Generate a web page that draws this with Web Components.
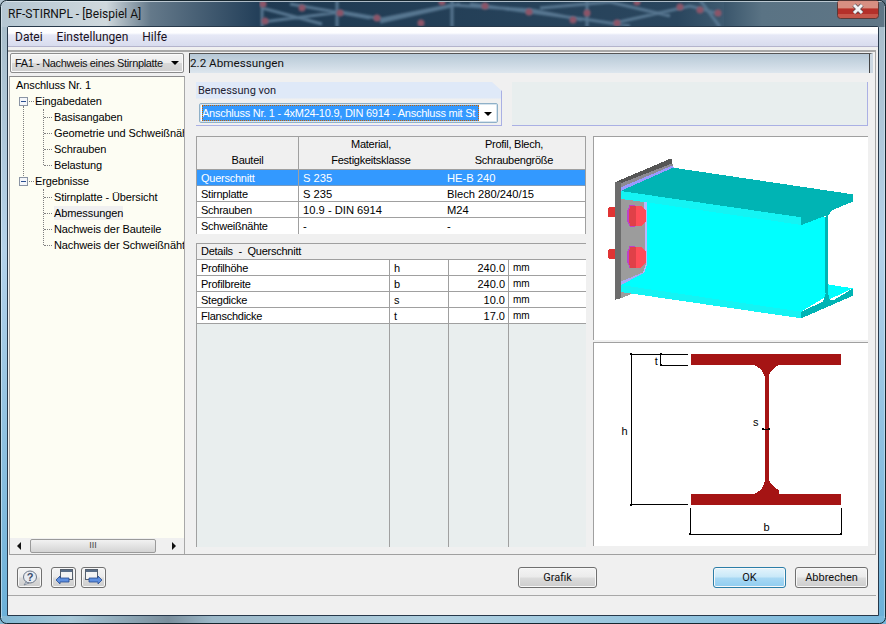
<!DOCTYPE html>
<html>
<head>
<meta charset="utf-8">
<title>RF-STIRNPL</title>
<style>
html, body { margin: 0; padding: 0; width: 886px; height: 624px; overflow: hidden; background: #4c6a80; }
body { font: 11px "Liberation Sans", Arial, sans-serif; color: #000; }
</style>
</head>
<body>
<app-window>
  <title-bar slot="title">RF-STIRNPL - [Beispiel A]</title-bar>
  <menu-bar slot="menu"></menu-bar>
  <side-panel slot="side"></side-panel>
  <page-head slot="head">2.2 Abmessungen</page-head>
  <design-group slot="group"></design-group>
  <parts-table slot="parts"></parts-table>
  <details-table slot="details"></details-table>
  <view-3d slot="view"></view-3d>
  <section-view slot="section"></section-view>
  <button-bar slot="buttons"></button-bar>
</app-window>

<script>
const FONT = '"Liberation Sans", Arial, sans-serif';
const UI = 'Roboto, "Liberation Sans", Arial, sans-serif';

function shadow(el, html) {
    const t = document.createElement('template');
    t.innerHTML = html;
    el.attachShadow({ mode: 'open' }).appendChild(t.content.cloneNode(true));
}

class AppWindow extends HTMLElement {
    constructor() {
        super();
        const dots = [[265, 21], [263, 4], [302, 8], [340, 13], [377, 18], [421, 23], [442, 2], [485, 6], [529, 12], [573, 20], [587, 13], [617, 23], [637, 2], [680, 7], [700, 10], [718, 13]];
        shadow(this, `
            <style>
                :host {
                    display: flex; flex-direction: column; width: 886px; height: 624px; box-sizing: border-box;
                    padding: 0 7px 8px 7px; position: relative; overflow: hidden;
                    font: 11px ${FONT};
                }
                .frame { position: absolute; inset: 0; }
                .client {
                    position: relative; flex: 1; display: flex; flex-direction: column; min-height: 0;
                    background: #f0f0f0; border: 1px solid #27384a; border-radius: 2px 2px 0 0;
                }
                .body {
                    flex: 1; display: flex; min-height: 0; gap: 4px; margin: 3px 2px 0 0; padding: 1px 2px 0 1px;
                    border-top: 2px solid #a8a8a8; border-right: 1px solid #a8a8a8;
                }
                .right { flex: 1; display: flex; flex-direction: column; min-width: 0; }
                .page { flex: 1; display: flex; gap: 7px; min-height: 0; padding: 0 0 7px 7px; flex-wrap: nowrap; }
                .tables { width: 390px; display: flex; flex-direction: column; flex: none; }
                .views { flex: 1; display: flex; flex-direction: column; padding-top: 63px; }
                ::slotted([slot=group]) { margin: 9px 0 10px; }
            </style>
            <svg class="frame" width="886" height="624" viewBox="0 0 886 624">
                <defs>
                    <linearGradient id="top" x1="0" x2="1" y1="0" y2="0">
                        <stop offset="0" stop-color="#b4c6d2"/>
                        <stop offset=".12" stop-color="#cfd8dd"/>
                        <stop offset=".17" stop-color="#64798a"/>
                        <stop offset=".29" stop-color="#24405a"/>
                        <stop offset=".5" stop-color="#2b4660"/>
                        <stop offset=".8" stop-color="#2d4a62"/>
                        <stop offset=".86" stop-color="#5a7384"/>
                        <stop offset="1" stop-color="#5f7686"/>
                    </linearGradient>
                    <linearGradient id="bot" x1="0" x2="1" y1="0" y2="0">
                        <stop offset="0" stop-color="#82b8d4"/>
                        <stop offset=".08" stop-color="#a8c8d8"/>
                        <stop offset=".19" stop-color="#7a8e9c"/>
                        <stop offset=".24" stop-color="#9cb8c8"/>
                        <stop offset=".5" stop-color="#b0d0e0"/>
                        <stop offset="1" stop-color="#78b8dc"/>
                    </linearGradient>
                    <linearGradient id="side" x1="0" x2="0" y1="0" y2="1">
                        <stop offset="0" stop-color="#a8bcc8"/>
                        <stop offset=".4" stop-color="#b4d2ea"/>
                        <stop offset="1" stop-color="#6ab0d8"/>
                    </linearGradient>
                    <filter id="soft" x="-5%" y="-50%" width="110%" height="200%"><feGaussianBlur stdDeviation="1.300"/></filter>
                    <linearGradient id="netfade" x1="0" x2="1" y1="0" y2="0">
                        <stop offset="0" stop-color="#1f3a52"/>
                        <stop offset=".9" stop-color="#2a465e"/>
                        <stop offset="1" stop-color="#3e5a70"/>
                    </linearGradient>
                    <clipPath id="net"><rect x="259" y="2" width="465" height="24"/></clipPath>
                </defs>
                <rect width="886" height="624" fill="url(#side)"/>
                <rect width="886" height="27" fill="url(#top)"/>
                <rect y="616" width="886" height="8" fill="url(#bot)"/>
                <g clip-path="url(#net)">
                    <rect x="259" y="1" width="465" height="25" fill="url(#netfade)"/>
                    <g stroke="#577690" stroke-width="3" fill="none" filter="url(#soft)">
                        <path d="M262 0v27M337 0v27M452 0v27M587 0v27M700 0l20 27"/>
                        <path d="M262 22l80-10 40 7 70-14 80 5 50 10M290 4l80 14M380 22l80-18M470 4l120 16 40 6M540 8l70-6 60 14M610 24l80-18 30 8M262 8l60 16"/>
                    </g>
                    <g fill="#8c5468" filter="url(#soft)">
                        ${dots.map(d => `<circle cx="${d[0]}" cy="${d[1]}" r="3.500"/>`).join('')}
                    </g>
                </g>
                <path d="M3 1.500H883" stroke="#e4edf2" stroke-opacity=".7"/>
                <rect x=".5" y=".5" width="885" height="623" rx="6" fill="none" stroke="#16262f"/>
                <path d="M1.500 6V618" stroke="#eef6fb" stroke-opacity=".5"/>
                <path d="M884.500 6V618" stroke="#eef6fb" stroke-opacity=".4"/>
                <rect x="837.5" y=".5" width="41" height="18" rx="3" fill="#c5564a" stroke="#5a3a38"/>
                <rect x="838" y="1" width="40" height="7" fill="#d78f82"/>
                <rect x="838" y="9" width="40" height="5" fill="#b4302a"/>
                <path d="M854 5l8 8M862 5l-8 8" stroke="#5a4a50" stroke-width="4.500" fill="none"/>
                <path d="M854 5l8 8M862 5l-8 8" stroke="#f2f4f6" stroke-width="3" fill="none"/>
            </svg>
            <slot name="title"></slot>
            <div class="client">
                <slot name="menu"></slot>
                <div class="body">
                    <slot name="side"></slot>
                    <div class="right">
                        <slot name="head"></slot>
                        <div class="page">
                            <div class="tables">
                                <slot name="group"></slot>
                                <slot name="parts"></slot>
                                <slot name="details"></slot>
                            </div>
                            <div class="views">
                                <slot name="view"></slot>
                                <slot name="section"></slot>
                            </div>
                        </div>
                    </div>
                </div>
                <slot name="buttons"></slot>
            </div>
        `);
    }
}

class TitleBar extends HTMLElement {
    constructor() {
        super();
        shadow(this, `
            <style>
                :host { display: block; height: 26px; flex: none; box-sizing: border-box; padding: 7px 0 0 1px; font: 12px/14px ${UI}; color: #111; position: relative; }
            </style>
            <slot></slot>
        `);
    }
}

class MenuBar extends HTMLElement {
    constructor() {
        super();
        shadow(this, `
            <style>
                :host {
                    display: flex; gap: 14px; height: 20px; box-sizing: border-box; padding: 3px 0 0 7px;
                    font: 12px/15px ${UI}; color: #1a1020; flex: none;
                    background: linear-gradient(#ffffff 0, #fdfdff 6px, #e6e8f6 8px, #d8dcee 19px);
                    border-bottom: 1px solid #b4b4cc;
                }
            </style>
            <span>Datei</span><span>Einstellungen</span><span>Hilfe</span>
        `);
    }
}

class SidePanel extends HTMLElement {
    constructor() {
        super();
        const expander = '<svg width="9" height="9"><rect x=".5" y=".5" width="8" height="8" fill="#f4f6fa" stroke="#8a94a4"/><path d="M2 4.500h5" stroke="#2a4f90"/></svg>';
        const leaves = list => list.map(t => `<div class="leaf"><span>${t}</span></div>`).join('');
        shadow(this, `
            <style>
                :host { display: flex; flex-direction: column; width: 176px; gap: 3px; flex: none; }
                .combo {
                    height: 20px; flex: none; margin: 0 1px; box-sizing: border-box; border: 1px solid #8c8c8c; border-radius: 2px;
                    background: linear-gradient(#f4f4f4 0, #ececec 50%, #d8d8d8 52%, #cfcfcf 100%);
                    display: flex; align-items: center; padding-left: 4px; font: 11px ${FONT}; letter-spacing: -.35px; color: #111; position: relative;
                    box-shadow: inset 0 0 0 1px #fafafa;
                }
                .combo span { width: 151px; overflow: hidden; white-space: nowrap; }
                .combo i { position: absolute; right: 4px; top: 7px; border: 4px solid transparent; border-top: 4px solid #000; }
                .tree {
                    flex: 1; border: 1px solid #a8a8a8; border-bottom: 0; border-top-color: #8c8c8c; background: #fdfdf3;
                    display: flex; flex-direction: column; min-height: 0;
                }
                .wrap { position: relative; flex: 1; overflow: hidden; }
                .items { padding: 0 0 0 6px; white-space: nowrap; font: 11px ${FONT}; letter-spacing: -.1px; }
                .row, .node, .leaf { height: 16px; line-height: 16px; position: relative; }
                .node { padding-left: 19px; }
                .node svg { position: absolute; left: 3px; top: 4px; }
                .node::after { content: ""; position: absolute; left: 13px; top: 8px; width: 5px; border-top: 1px dotted #808080; }
                .kids { position: relative; padding-left: 38px; }
                .kids::before { content: ""; position: absolute; left: 27px; top: 0; bottom: 8px; border-left: 1px dotted #808080; }
                .leaf::before { content: ""; position: absolute; left: -10px; top: 8px; width: 8px; border-top: 1px dotted #808080; }
                .sel span { background: #f0f0f0; padding: 1px 0; }
                .vline { position: absolute; left: 13px; top: 29px; height: 70px; border-left: 1px dotted #808080; }
                .scroll { height: 16px; flex: none; background: #f0f0f0; position: relative; }
                .thumb {
                    position: absolute; left: 20px; width: 124px; top: 1px; height: 12px; border: 1px solid #9a9a9a; border-radius: 2px;
                    background: linear-gradient(#f2f2f2, #d4d4d4); text-align: center; font: 9px/11px ${FONT}; color: #444;
                }
                .arr { position: absolute; top: 4px; border: 4px solid transparent; }
                .arr.l { left: 7px; border-right: 4px solid #111; border-left-width: 0; }
                .arr.r { right: 8px; border-left: 4px solid #111; border-right-width: 0; }
            </style>
            <div class="combo"><span>FA1 - Nachweis eines Stirnplatte</span><i></i></div>
            <div class="tree">
                <div class="wrap">
                    <div class="vline"></div>
                    <div class="items">
                        <div class="row">Anschluss Nr. 1</div>
                        <div class="node">${expander}Eingabedaten</div>
                        <div class="kids">${leaves(['Basisangaben', 'Geometrie und Schweißnäh', 'Schrauben', 'Belastung'])}</div>
                        <div class="node">${expander}Ergebnisse</div>
                        <div class="kids">
                            <div class="leaf"><span>Stirnplatte - Übersicht</span></div>
                            <div class="leaf sel"><span>Abmessungen</span></div>
                            <div class="leaf"><span>Nachweis der Bauteile</span></div>
                            <div class="leaf"><span>Nachweis der Schweißnäht</span></div>
                        </div>
                    </div>
                </div>
                <div class="scroll"><i class="arr l"></i><div class="thumb">III</div><i class="arr r"></i></div>
            </div>
        `);
    }
}

class PageHead extends HTMLElement {
    constructor() {
        super();
        shadow(this, `
            <style>
                :host {
                    display: block; height: 20px; box-sizing: border-box; flex: none;
                    border-top: 1px solid #555; border-left: 1px solid #444; border-right: 3px solid #ccd8e2;
                    box-shadow: inset -1px 0 #444;
                    background: linear-gradient(#b6c8d6, #dde6ee);
                    font: 11.700px/19px ${UI}; color: #111;
                }
            </style>
            <slot></slot>
        `);
    }
}

class DesignGroup extends HTMLElement {
    constructor() {
        super();
        shadow(this, `
            <style>
                :host { display: flex; gap: 10px; height: 44px; width: 672px; flex: none; }
                .box {
                    width: 306px; box-sizing: border-box; position: relative;
                    background: linear-gradient(#dfe9f8 0, #dfe9f8 16px, #f0f0f0 17px);
                    border-right: 1px solid #aab0e4; border-bottom: 1px solid #aab0e4;
                    clip-path: polygon(0 0, 296px 0, 100% 9px, 100% 100%, 0 100%);
                }
                .cap { font: 11px/15px ${UI}; color: #223; padding: 1px 0 0 2px; height: 21px; box-sizing: border-box; }
                .select {
                    margin: 0 0 0 3px; width: 299px; height: 20px; box-sizing: border-box; border: 1px solid #8fb0c8; border-radius: 2px; background: #fff;
                    display: flex; align-items: center; padding-left: 2px; position: relative; box-shadow: inset 0 0 0 1px #d6e4ee;
                    font: 11px ${FONT}; letter-spacing: -.25px;
                }
                .select span { background: #3399ff; color: #fff; width: 277px; height: 16px; line-height: 16px; overflow: hidden; white-space: nowrap; outline: 1px dotted #c86000; outline-offset: -1px; }
                .select i { position: absolute; right: 5px; top: 8px; border: 4px solid transparent; border-top: 4px solid #000; }
                .blank { background: #e8eeee; border-right: 1px solid #aab0e4; border-bottom: 1px solid #aab0e4; box-sizing: border-box; width: 356px; flex: none; }
            </style>
            <div class="box">
                <div class="cap">Bemessung von</div>
                <div class="select"><span>Anschluss Nr. 1 - 4xM24-10.9, DIN 6914 - Anschluss mit St</span><i></i></div>
            </div>
            <div class="blank"></div>
        `);
    }
}

class PartsTable extends HTMLElement {
    constructor() {
        super();
        const rows = [
            ['Querschnitt', 'S 235', 'HE-B 240'],
            ['Stirnplatte', 'S 235', 'Blech 280/240/15'],
            ['Schrauben', '10.9 - DIN 6914', 'M24'],
            ['Schweißnähte', '-', '-']
        ];
        shadow(this, `
            <style>
                :host {
                    display: grid; grid-template-columns: 102px 144px 1fr; width: 390px; box-sizing: border-box; flex: none;
                    border-top: 1px solid #a0a0a0; border-left: 1px solid #a0a0a0; font: 11px ${FONT}; background: #fff; margin-bottom: 9px;
                }
                .h {
                    height: 33px; box-sizing: border-box; background: #f0f0f0; border-right: 1px solid #a0a0a0; border-bottom: 1px solid #a0a0a0;
                    text-align: center; display: flex; flex-direction: column; justify-content: flex-end; line-height: 16px; padding-bottom: 1px; letter-spacing: -.25px;
                }
                .h:nth-child(3) { border-right: 0; }
                .c {
                    height: 16px; box-sizing: border-box; line-height: 16px; padding-left: 4px; white-space: nowrap;
                    border-right: 1px solid #a0a0a0; border-bottom: 1px solid #a0a0a0; font-size: 11.200px;
                }
                .c:nth-child(3n+3) { border-right: 0; }
                .on { background: #3399ff; color: #fff; border-bottom-color: #7a9cc0; }
                .last { border-bottom: 0; }
                .l { padding-left: 4px; font-size: 11px; letter-spacing: -.25px; }
            </style>
            <div class="h"><div>Bauteil</div></div>
            <div class="h"><div>Material,</div><div>Festigkeitsklasse</div></div>
            <div class="h"><div>Profil, Blech,</div><div>Schraubengröße</div></div>
            ${rows.map((r, i) => r.map((c, j) => `<div class="c ${i === 0 ? 'on' : ''} ${i === 3 ? 'last' : ''} ${j === 0 ? 'l' : ''}">${c}</div>`).join('')).join('')}
        `);
    }
}

class DetailsTable extends HTMLElement {
    constructor() {
        super();
        const rows = [
            ['Profilhöhe', 'h', '240.0'],
            ['Profilbreite', 'b', '240.0'],
            ['Stegdicke', 's', '10.0'],
            ['Flanschdicke', 't', '17.0']
        ];
        shadow(this, `
            <style>
                :host {
                    flex: 1; display: flex; flex-direction: column; width: 390px; box-sizing: border-box; min-height: 0;
                    border-top: 1px solid #a0a0a0; border-left: 1px solid #a0a0a0; font: 11px ${FONT}; background: #e9eeee;
                }
                .title { height: 16px; flex: none; box-sizing: border-box; padding-left: 4px; line-height: 15px; background: #f0f0f0; border-bottom: 1px solid #a0a0a0; white-space: pre; letter-spacing: -.25px; }
                .grid { flex: 1; display: grid; grid-template-columns: 193px 59px 60px 1fr; grid-template-rows: repeat(4, 16px) 1fr; min-height: 0; }
                .c { box-sizing: border-box; height: 16px; line-height: 16px; background: #fff; border-bottom: 1px solid #a0a0a0; border-right: 1px solid #a0a0a0; padding: 0 4px; }
                .n { letter-spacing: -.25px; }
                .r { text-align: right; padding-right: 3px; }
                .u { border-right: 0; font-size: 10px; }
                .e { border-right: 1px solid #a0a0a0; }
                .e:last-child { border-right: 0; }
            </style>
            <div class="title">Details  -  Querschnitt</div>
            <div class="grid">
                ${rows.map(r => `<div class="c n">${r[0]}</div><div class="c">${r[1]}</div><div class="c r">${r[2]}</div><div class="c u">mm</div>`).join('')}
                <div class="e"></div><div class="e"></div><div class="e"></div><div class="e"></div>
            </div>
        `);
    }
}

class View3d extends HTMLElement {
    constructor() {
        super();
        shadow(this, `
            <style>
                :host { display: block; height: 204px; width: 275px; flex: none; box-sizing: border-box; background: #fff; border-top: 1px solid #a0a0a0; border-left: 1px solid #a0a0a0; }
                svg { display: block; }
            </style>
            <svg width="274" height="203" viewBox="13 21 822 609" shape-rendering="crispEdges">
                <!-- plate -->
                <polygon points="75,157 93,150 93,505 75,510" fill="#6c6c6c"/>
                <polygon points="75,157 240,87 248,87 248,100 93,160 93,157" fill="#555"/>
                <polygon points="93,160 248,100 250,110 93,175" fill="#8c8a92"/>
                <polygon points="93,172 250,106 254,118 93,186" fill="#9a9aff"/>
                <polygon points="93,205 172,215 172,430 93,462" fill="#9c9c9c"/>
                <polygon points="93,484 130,490 93,505" fill="#9c9c9c"/>
                <polygon points="93,455 158,428 160,436 93,466" fill="#a8a8f4"/>
                <!-- beam web and flanges -->
                <polygon points="172,215 635,283 700,258 712,265 712,498 635,545 93,465 158,432 172,405" fill="#00ffff"/>
                <polygon points="164,216 172,216 172,405 164,428 160,428 168,405" fill="#b8b8ff"/>
                <polygon points="93,183 635,262 635,285 172,217 93,207" fill="#14f4f4"/>
                <polygon points="93,183 250,113 790,193 790,215 635,262" fill="#00b4b4"/>
                <polygon points="635,262 790,215 728,240 712,262 706,258 635,285" fill="#00b4b4"/>
                <polygon points="707,262 714,262 714,488 707,488" fill="#00b4b4"/>
                <polygon points="714,463 790,475 715,510" fill="#00ffff"/>
                <polygon points="635,545 700,515 708,490 716,490 718,508 730,512 790,475 790,497 635,565" fill="#00b4b4"/>
                <polygon points="93,465 635,545 635,565 93,486" fill="#14f4f4"/>
                <!-- back nuts -->
                <polygon points="60,232 75,232 75,262 60,262 54,258 54,238" fill="#e03434"/>
                <polygon points="60,357 75,358 75,387 60,387 54,382 54,362" fill="#e03434"/>
                <!-- washers and heads -->
                <polygon points="120,225 135,225 135,290 120,290 112,272 112,243" fill="#c040c8"/>
                <polygon points="120,348 135,348 135,414 120,414 112,396 112,366" fill="#c040c8"/>
                <polygon points="122,228 155,228 168,240 168,275 155,288 122,288 117,272 117,245" fill="#e04048"/>
                <polygon points="122,352 155,352 168,365 168,400 155,413 122,413 117,396 117,368" fill="#e04048"/>
                <polygon points="140,228 155,228 168,240 168,275 155,288 140,288" fill="#ff4c58"/>
                <polygon points="140,352 155,352 168,365 168,400 155,413 140,413" fill="#ff4c58"/>
            </svg>
        `);
    }
}

class SectionView extends HTMLElement {
    constructor() {
        super();
        shadow(this, `
            <style>
                :host { display: block; height: 204px; width: 275px; margin-top: 2px; flex: none; box-sizing: border-box; background: #fff; border-top: 1px solid #a0a0a0; border-left: 1px solid #a0a0a0; }
                svg { display: block; }
                text { font: 33px ${FONT}; fill: #000; text-anchor: middle; }
            </style>
            <svg width="274" height="203" viewBox="13 9 822 609">
                <path fill="#a51414" shape-rendering="crispEdges" d="M303 42h450v33H568l-6 3-9 6-9 9-4 9-3 6V414l3 9 4 9 9 9 9 6 6 3v12h185v33H303v-33h190l6-3 9-6 9-9 5-9 3-9V108l-3-6-5-9-9-9-9-6-6-3H303z"/>
                <g stroke="#000" stroke-width="3" fill="none" shape-rendering="crispEdges">
                    <path d="M123 43h171M123 494h171M124 43v451M213 43v33M213 76h81M302 505v79M754 505v79M302 583h453M519 268h18"/>
                </g>
                <g fill="#000" shape-rendering="crispEdges">
                    <rect x="120" y="40" width="6" height="6"/><rect x="120" y="491" width="6" height="6"/>
                    <rect x="210" y="40" width="6" height="6"/><rect x="210" y="73" width="6" height="6"/>
                    <rect x="516" y="264" width="6" height="7"/><rect x="534" y="264" width="6" height="7"/>
                    <rect x="299" y="580" width="6" height="6"/><rect x="751" y="580" width="6" height="6"/>
                </g>
                <text x="105" y="285">h</text>
                <text x="200" y="75">t</text>
                <text x="498" y="258">s</text>
                <text x="531" y="573">b</text>
            </svg>
        `);
    }
}

class ButtonBar extends HTMLElement {
    constructor() {
        super();
        const btn = 'linear-gradient(#f4f4f4 0, #ebebeb 48%, #dcdcdc 52%, #cdcdcd 100%)';
        shadow(this, `
            <style>
                :host { display: block; flex: none; }
                .bar { height: 41px; box-sizing: border-box; border-top: 1px solid #a0a0a0; margin: 0 2px 0 1px; display: flex; align-items: flex-start; padding: 12px 0 0 8px; }
                .tool, .b { box-sizing: border-box; border: 1px solid #707070; border-radius: 3px; background: ${btn}; display: flex; align-items: center; justify-content: center; font: 11px ${UI}; color: #111; box-shadow: inset 0 0 0 1px #f8f8f8; flex: none; }
                .tool { width: 25px; height: 21px; }
                .back { margin-left: 9px; }
                .next { margin-left: 5px; }
                .b { height: 21px; width: 79px; }
                .grafik { margin-left: 412px; }
                .ok { margin-left: 116px; width: 73px; border-color: #2c7ea8; background: linear-gradient(#e4f4fc, #c8e8f8 48%, #a8d8f4 52%, #90cdf0); }
                .ab { margin-left: 9px; width: 73px; }
                .status { height: 20px; box-sizing: border-box; border-top: 1px solid #a8a8a8; margin-right: 2px; }
            </style>
            <div class="bar">
                <div class="tool">
                    <svg width="18" height="16" viewBox="0 0 18 16"><ellipse cx="9" cy="7" rx="6.500" ry="6" fill="#e8ecf2" stroke="#6a7688"/><path d="M5 12l-2 3 5-2z" fill="#dde2ea" stroke="#6a7688" stroke-width=".7"/><text x="9" y="11" text-anchor="middle" font-family="Liberation Sans" font-size="11" font-weight="bold" fill="#3a4c6c">?</text></svg>
                </div>
                <div class="tool back">
                    <svg width="20" height="18" viewBox="0 0 20 18"><rect x="6.500" y=".5" width="12" height="10" fill="#f4f4f4" stroke="#55606e"/><rect x="7" y="1" width="11" height="2" fill="#5a6e88"/><path d="M2 11l4-4v2h9v4h-9v2z" fill="#5e8fe0" stroke="#244a90" stroke-width=".8"/></svg>
                </div>
                <div class="tool next">
                    <svg width="20" height="18" viewBox="0 0 20 18"><rect x="1.500" y=".5" width="12" height="10" fill="#f4f4f4" stroke="#55606e"/><rect x="2" y="1" width="11" height="2" fill="#5a6e88"/><path d="M18 11l-4-4v2H5v4h9v2z" fill="#5e8fe0" stroke="#244a90" stroke-width=".8"/></svg>
                </div>
                <div class="b grafik">Grafik</div>
                <div class="b ok">OK</div>
                <div class="b ab">Abbrechen</div>
            </div>
            <div class="status"></div>
        `);
    }
}

customElements.define('app-window', AppWindow);
customElements.define('title-bar', TitleBar);
customElements.define('menu-bar', MenuBar);
customElements.define('side-panel', SidePanel);
customElements.define('page-head', PageHead);
customElements.define('design-group', DesignGroup);
customElements.define('parts-table', PartsTable);
customElements.define('details-table', DetailsTable);
customElements.define('view-3d', View3d);
customElements.define('section-view', SectionView);
customElements.define('button-bar', ButtonBar);
</script>
</body>
</html>
